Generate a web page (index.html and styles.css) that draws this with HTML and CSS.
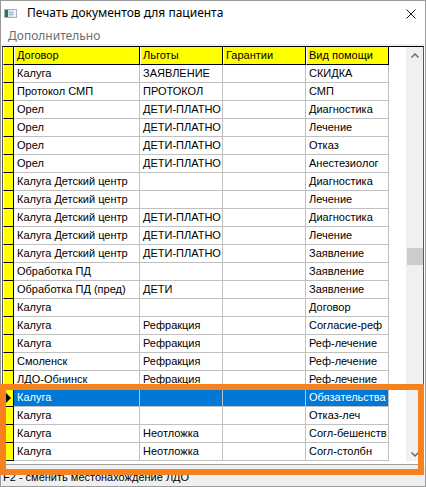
FILE: index.html
```html
<!DOCTYPE html>
<html lang="ru">
<head>
<meta charset="utf-8">
<title>Печать документов для пациента</title>
<link rel="stylesheet" href="styles.css">
</head>
<body>
<div class="window">
  <div class="titlebar">
    <svg class="app-icon" width="13" height="9" viewBox="0 0 13 9">
      <rect x="0.5" y="0.5" width="12" height="8" fill="#f2f4f6" stroke="#a9b1b9"/>
      <rect x="1" y="1" width="3" height="7" fill="#2f6f6a"/>
      <rect x="4" y="1" width="6" height="7" fill="#d6e2ec"/>
      <rect x="5" y="3" width="4" height="1" fill="#9ab3ca"/>
      <rect x="5" y="5" width="4" height="1" fill="#9ab3ca"/>
    </svg>
    <span class="title">Печать документов для пациента</span>
    <svg class="close" width="10" height="10" viewBox="0 0 10 10">
      <path d="M0.5 0.5 L9.5 9.5 M9.5 0.5 L0.5 9.5" stroke="#111" stroke-width="1" fill="none"/>
    </svg>
  </div>
  <div class="menubar"><span class="menu-item">Дополнительно</span></div>
  <div class="sep"></div>
  <div class="grid">
    <div class="gridbody">
      <div class="rows">
        <div class="row head">
          <div class="ind"></div>
          <div class="hc w1">Договор</div>
          <div class="hc w2">Льготы</div>
          <div class="hc w3">Гарантии</div>
          <div class="hc w4">Вид помощи</div>
        </div>
        <div class="row"><div class="ind"></div><div class="c w1">Калуга</div><div class="c w2">ЗАЯВЛЕНИЕ</div><div class="c w3"></div><div class="c w4">СКИДКА</div></div>
        <div class="row"><div class="ind"></div><div class="c w1">Протокол СМП</div><div class="c w2">ПРОТОКОЛ</div><div class="c w3"></div><div class="c w4">СМП</div></div>
        <div class="row"><div class="ind"></div><div class="c w1">Орел</div><div class="c w2">ДЕТИ-ПЛАТНО</div><div class="c w3"></div><div class="c w4">Диагностика</div></div>
        <div class="row"><div class="ind"></div><div class="c w1">Орел</div><div class="c w2">ДЕТИ-ПЛАТНО</div><div class="c w3"></div><div class="c w4">Лечение</div></div>
        <div class="row"><div class="ind"></div><div class="c w1">Орел</div><div class="c w2">ДЕТИ-ПЛАТНО</div><div class="c w3"></div><div class="c w4">Отказ</div></div>
        <div class="row"><div class="ind"></div><div class="c w1">Орел</div><div class="c w2">ДЕТИ-ПЛАТНО</div><div class="c w3"></div><div class="c w4">Анестезиолог</div></div>
        <div class="row"><div class="ind"></div><div class="c w1">Калуга Детский центр</div><div class="c w2"></div><div class="c w3"></div><div class="c w4">Диагностика</div></div>
        <div class="row"><div class="ind"></div><div class="c w1">Калуга Детский центр</div><div class="c w2"></div><div class="c w3"></div><div class="c w4">Лечение</div></div>
        <div class="row"><div class="ind"></div><div class="c w1">Калуга Детский центр</div><div class="c w2">ДЕТИ-ПЛАТНО</div><div class="c w3"></div><div class="c w4">Диагностика</div></div>
        <div class="row"><div class="ind"></div><div class="c w1">Калуга Детский центр</div><div class="c w2">ДЕТИ-ПЛАТНО</div><div class="c w3"></div><div class="c w4">Лечение</div></div>
        <div class="row"><div class="ind"></div><div class="c w1">Калуга Детский центр</div><div class="c w2">ДЕТИ-ПЛАТНО</div><div class="c w3"></div><div class="c w4">Заявление</div></div>
        <div class="row"><div class="ind"></div><div class="c w1">Обработка ПД</div><div class="c w2"></div><div class="c w3"></div><div class="c w4">Заявление</div></div>
        <div class="row"><div class="ind"></div><div class="c w1">Обработка ПД (пред)</div><div class="c w2">ДЕТИ</div><div class="c w3"></div><div class="c w4">Заявление</div></div>
        <div class="row"><div class="ind"></div><div class="c w1">Калуга</div><div class="c w2"></div><div class="c w3"></div><div class="c w4">Договор</div></div>
        <div class="row"><div class="ind"></div><div class="c w1">Калуга</div><div class="c w2">Рефракция</div><div class="c w3"></div><div class="c w4">Согласие-реф</div></div>
        <div class="row"><div class="ind"></div><div class="c w1">Калуга</div><div class="c w2">Рефракция</div><div class="c w3"></div><div class="c w4">Реф-лечение</div></div>
        <div class="row"><div class="ind"></div><div class="c w1">Смоленск</div><div class="c w2">Рефракция</div><div class="c w3"></div><div class="c w4">Реф-лечение</div></div>
        <div class="row"><div class="ind"></div><div class="c w1">ЛДО-Обнинск</div><div class="c w2">Рефракция</div><div class="c w3"></div><div class="c w4">Реф-лечение</div></div>
        <div class="row sel"><div class="ind"><span class="tri"></span></div><div class="c w1">Калуга</div><div class="c w2"></div><div class="c w3"></div><div class="c w4">Обязательства</div></div>
        <div class="row"><div class="ind"></div><div class="c w1">Калуга</div><div class="c w2"></div><div class="c w3"></div><div class="c w4">Отказ-леч</div></div>
        <div class="row"><div class="ind"></div><div class="c w1">Калуга</div><div class="c w2">Неотложка</div><div class="c w3"></div><div class="c w4">Согл-бешенств</div></div>
        <div class="row"><div class="ind"></div><div class="c w1">Калуга</div><div class="c w2">Неотложка</div><div class="c w3"></div><div class="c w4">Согл-столбн</div></div>
      </div>
      <div class="vscroll">
        <div class="arrow"><svg width="8" height="5" viewBox="0 0 8 5"><path d="M0.5 4.5 L4 1 L7.5 4.5" stroke="#606060" stroke-width="1.3" fill="none"/></svg></div>
        <div class="track"><div class="thumb"></div></div>
        <div class="arrow down"><svg width="8" height="5" viewBox="0 0 8 5"><path d="M0.5 0.5 L4 4 L7.5 0.5" stroke="#606060" stroke-width="1.3" fill="none"/></svg></div>
      </div>
    </div>
    <div class="hband"></div>
  </div>
  <div class="status">F2 - сменить местонахождение ЛДО</div>
  <div class="highlight"></div>
</div>
</body>
</html>
```

FILE: styles.css
```css
* { box-sizing: border-box; }
html, body { margin: 0; padding: 0; }
body {
  width: 426px;
  height: 487px;
  overflow: hidden;
  background: #fff;
  font-family: "Liberation Sans", Arial, sans-serif;
  font-size: 11px;
  color: #000;
}
.window {
  position: relative;
  width: 426px;
  height: 487px;
  border: 1px solid #9a9a9a;
  background: #fff;
  display: flex;
  flex-direction: column;
}
.titlebar {
  height: 29px;
  flex-shrink: 0;
  display: flex;
  align-items: flex-start;
  padding-top: 4px;
}
.app-icon { margin-left: 3px; margin-top: 4px; flex-shrink: 0; }
.title {
  margin-left: 10px;
  font-family: "Noto Sans", "Open Sans", sans-serif;
  font-size: 12px;
  line-height: 16px;
  color: #000;
}
.close { margin-left: auto; margin-right: 9px; margin-top: 4px; }
.menubar {
  height: 14px;
  flex-shrink: 0;
  padding-left: 7px;
  font-family: "Noto Sans", "Open Sans", sans-serif;
  font-size: 12px;
  line-height: 12px;
  color: #6d6d6d;
}
.sep { height: 2px; flex-shrink: 0; background: #f0f0f0; }
.grid {
  flex-shrink: 0;
  margin: 0 1px;
  border-top: 1px solid #000;
  border-left: 1px solid #5a5a5a;
  border-right: 1px solid #5a5a5a;
  background: #fff;
}
.gridbody { display: flex; height: 414px; }
.rows { width: 403px; background: #fff; }
.row { display: flex; height: 18px; }
.ind {
  width: 11px;
  flex-shrink: 0;
  background: #ffff00;
  border-left: 1px solid #fff;
  border-right: 1px solid #000;
  border-bottom: 1px solid #000;
  display: flex;
  align-items: center;
}
.tri {
  width: 0;
  height: 0;
  margin-left: 2px;
  border-left: 5px solid #000;
  border-top: 5px solid transparent;
  border-bottom: 5px solid transparent;
}
.w1 { width: 126px; }
.w2, .w3, .w4 { width: 83px; }
.hc, .c {
  flex-shrink: 0;
  line-height: 17px;
  white-space: nowrap;
  overflow: hidden;
}
.hc {
  background: #ffff00;
  border-left: 1px solid #fff;
  border-right: 1px solid #000;
  border-bottom: 1px solid #000;
  padding-left: 2px;
}
.c {
  border-right: 1px solid #c0c0c0;
  border-bottom: 1px solid #c0c0c0;
  padding-left: 3px;
}
.sel .c { background: #0078d7; color: #fff; }
.vscroll {
  width: 17px;
  background: #f0f0f0;
  display: flex;
  flex-direction: column;
}
.arrow {
  height: 17px;
  display: flex;
  align-items: center;
  justify-content: center;
}
.arrow.down { align-items: flex-end; padding-bottom: 4px; }
.arrow svg { display: block; }
.track { flex: 1; }
.thumb {
  margin-top: 184px;
  margin-left: 1px;
  width: 16px;
  height: 17px;
  background: #cdcdcd;
}
.hband {
  height: 7px;
  background: linear-gradient(#fff 0 3px, #a0a0a0 3px 4px, #f0f0f0 4px);
}
.status {
  flex: 1;
  background: #f0f0f0;
  padding-left: 2px;
  padding-top: 3px;
  line-height: 13px;
  white-space: nowrap;
}
.highlight {
  position: absolute;
  left: -1px;
  top: 383px;
  width: 424px;
  height: 91px;
  border: 6px solid #f6821f;
}
```
